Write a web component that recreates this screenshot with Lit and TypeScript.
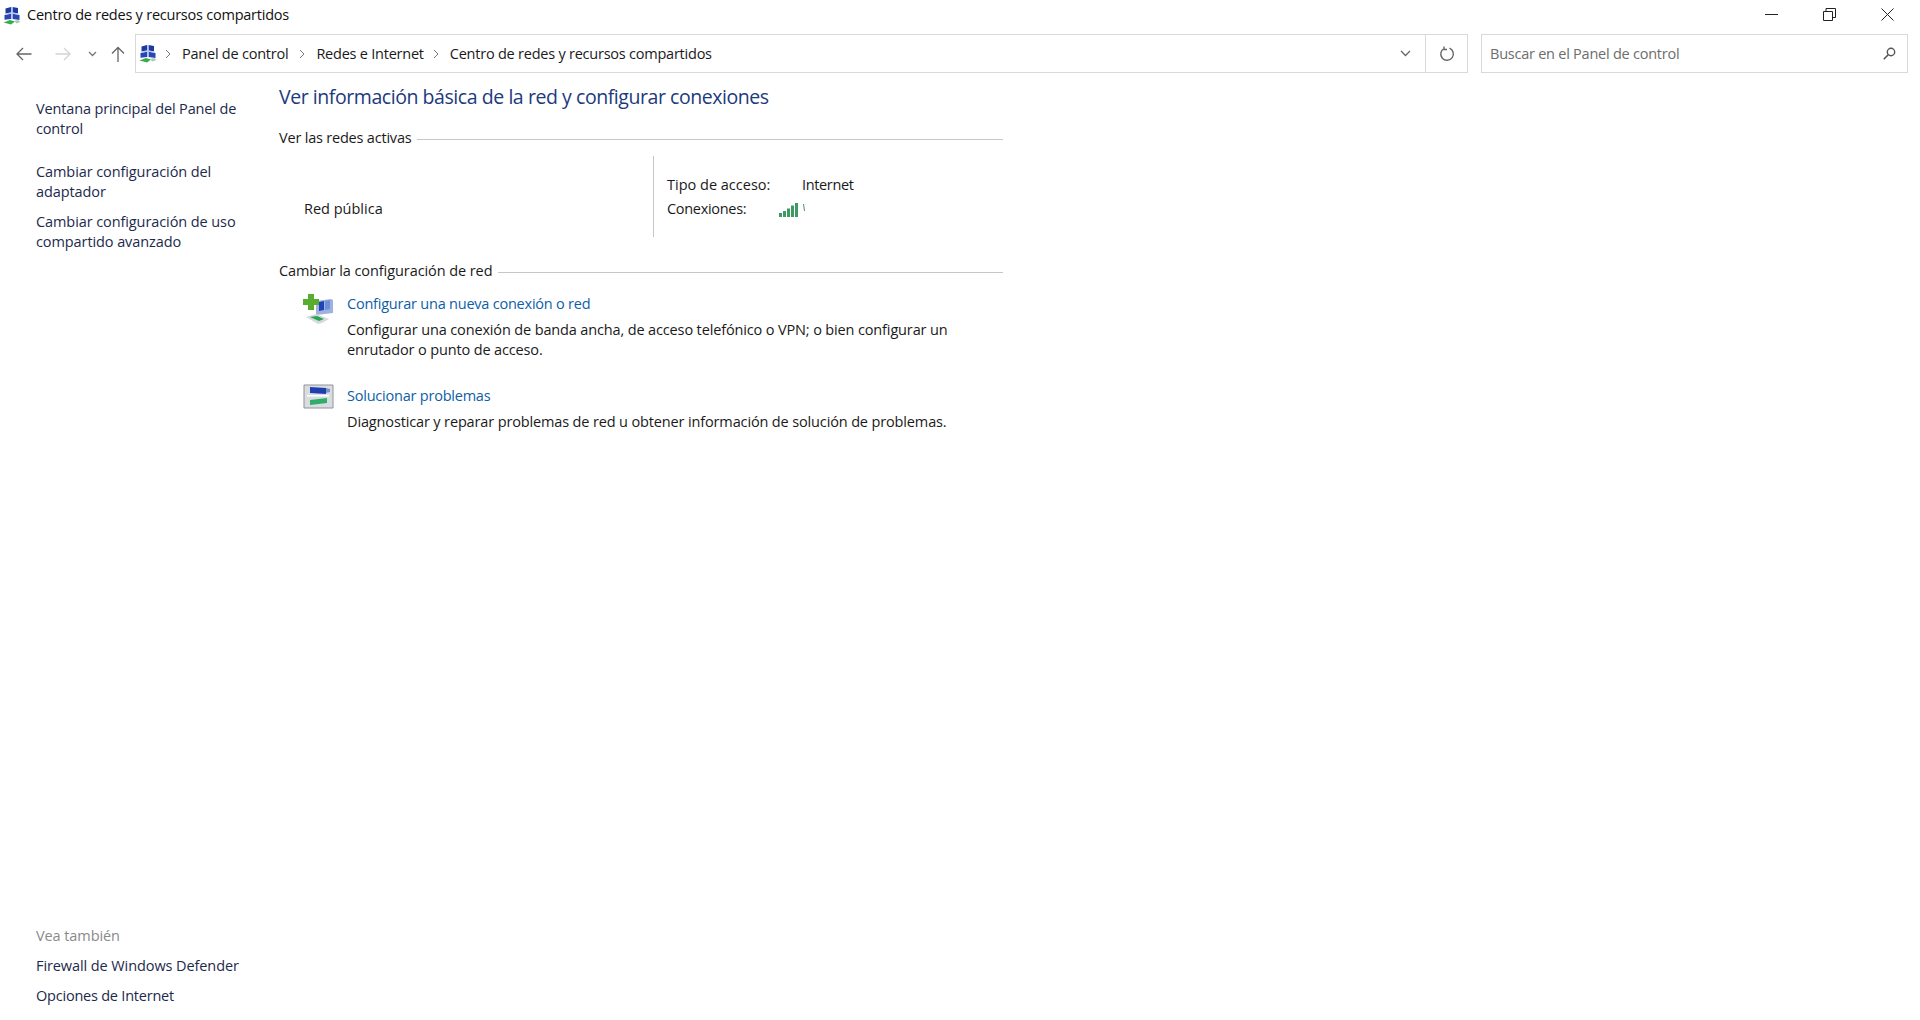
import { LitElement, html, css, svg } from "lit";
import { customElement } from "lit/decorators.js";

const cpIcon = svg`<svg class="cp" viewBox="0 0 18 19" width="18" height="19">
  <path d="M2.500 2.500l5.500-1.500v5.500L2.500 7.500zM9.500 1l5.500 1v5.500L9.500 6.500z" fill="#1f3a9e"/>
  <path d="M1.500 9l6.500-1.300v5.300L1.500 13.800zM9.500 7.700L16.500 9v5l-7-1z" fill="#2946b4"/>
  <path d="M8 1h1.500v12H8zM2 7.500l6-1 1.500 0 6 1v1.200l-6.500-1.200-6.500 1.200z" fill="#b4c6f2"/>
  <path d="M.5 16.500l6.500-2.500 5 1.500-4 3z" fill="#39ab4f"/>
  <path d="M11 15l4-1 2.500 2-4 1.500z" fill="#a6cfae"/>
</svg>`;

@customElement("app-root")
export class AppRoot extends LitElement {
  static styles = css`
    :host {
      display: flex; flex-direction: column; width: 1920px; height: 1020px; overflow: hidden;
      background: #fff; color: #1a1a1a;
      font-family: "Open Sans", "Noto Sans", sans-serif; font-size: 14.5px; line-height: 20px;
    }
    .titlebar { height: 34px; flex: none; display: flex; align-items: center; padding: 0 0 4px 3px; box-sizing: border-box; }
    .titlebar .cp { margin-right: 6px; }
    .title { flex: 1; letter-spacing: -0.23px; color: #111; }
    .winbtns { display: flex; align-items: center; gap: 45px; padding: 0 26px 1px 0; }
    .winbtns svg { display: block; }
    .nav { height: 39px; flex: none; display: flex; align-items: center; }
    .navbtns { width: 135px; flex: none; display: flex; align-items: center; padding-left: 16px; box-sizing: border-box; }
    .navbtns svg { display: block; }
    .address { width: 1333px; height: 39px; box-sizing: border-box; flex: none; border: 1px solid #d9d9d9; display: flex; align-items: center; padding-left: 3px; }
    .crumbs { flex: 1; display: flex; align-items: center; letter-spacing: -0.23px; color: #1a1a1a; }
    .crumbs .cp { margin-right: 8px; }
    .sep { margin: 0 11px 0 9px; display: block; flex: none; }
    .sep.first { margin: 0 11px 0 0; }
    .sep.second { margin: 0 11px 0 11px; }
    .dd { width: 40px; display: flex; justify-content: center; }
    .refresh { width: 41px; height: 37px; border-left: 1px solid #d9d9d9; display: flex; align-items: center; justify-content: center; }
    .search { margin-left: 13px; width: 427px; height: 39px; box-sizing: border-box; flex: none; border: 1px solid #d9d9d9; display: flex; align-items: center; justify-content: space-between; padding: 0 11px 0 8px; color: #6d6d6d; letter-spacing: -0.24px; }
    .body { flex: 1; display: flex; min-height: 0; }
    .side { width: 279px; flex: none; box-sizing: border-box; padding: 26px 0 0 36px; display: flex; flex-direction: column; color: #1d2a4d; letter-spacing: -0.09px; }
    .side .item { width: 215px; }
    .side .a { margin-bottom: 23px; letter-spacing: -0.15px; }
    .side .b { margin-bottom: 10px; }
    .spacer { flex: 1; }
    .seealso { color: #8a8a8a; margin-bottom: 10px; }
    .side .c { margin-bottom: 10px; }
    .side .d { margin-bottom: 14px; letter-spacing: -0.22px; }
    .main { width: 724px; flex: none; padding-top: 10px; letter-spacing: -0.14px; }
    h1 { margin: 0; font-size: 19.5px; font-weight: 400; line-height: 28px; letter-spacing: -0.44px; color: #1c3a7d; }
    .group { display: flex; align-items: center; gap: 6px; height: 20px; white-space: nowrap; }
    .group .rule { flex: 1; height: 1px; background: #c4c8cc; margin-top: 3px; }
    .g1 { margin-top: 17px; letter-spacing: -0.2px; }
    .active { display: flex; height: 81px; margin-top: 8px; }
    .left { width: 349px; padding: 43px 0 0 25px; letter-spacing: 0; }
    .vr { width: 1px; background: #c4c8cc; flex: none; }
    .info { padding: 17px 0 0 13px; display: grid; grid-template-columns: 135px auto; grid-auto-rows: 24px; align-items: center; }
    .tipo { letter-spacing: 0; }
    .inet { letter-spacing: -0.35px; }
    .cx { letter-spacing: -0.3px; }
    .conn { display: flex; align-items: center; margin-left: -23px; }
    .conn svg { display: block; }
    .g2 { margin-top: 24px; letter-spacing: -0.08px; }
    .task { display: flex; padding-left: 24px; }
    .task .ico { width: 44px; flex: none; }
    .task svg { display: block; }
    .t1 { margin-top: 13px; }
    .t2 { margin-top: 26px; }
    .link { color: #0d5ea6; letter-spacing: -0.22px; }
    .link-row { margin-bottom: 6px; }
  `;

  render() {
    return html`
      <div class="titlebar">
        ${cpIcon}
        <div class="title">Centro de redes y recursos compartidos</div>
        <div class="winbtns">
          <svg width="13" height="13" viewBox="0 0 13 13"><path d="M0 6.500h13" stroke="#222" fill="none"/></svg>
          <svg width="13" height="13" viewBox="0 0 13 13"><path d="M.5 3.500h9v9h-9zM3 3.500V.5h9.500v9H9.500" stroke="#222" fill="none"/></svg>
          <svg width="13" height="13" viewBox="0 0 13 13"><path d="M.5.5l12 12M12.500.5l-12 12" stroke="#222" fill="none"/></svg>
        </div>
      </div>
      <div class="nav">
        <div class="navbtns">
          <svg width="16" height="14" viewBox="0 0 16 14"><path d="M15.500 7H1M7 1L1 7l6 6" stroke="#666" stroke-width="1.3" fill="none"/></svg>
          <svg style="margin-left:23px" width="16" height="14" viewBox="0 0 16 14"><path d="M.5 7H15M9 1l6 6-6 6" stroke="#d4d4d4" stroke-width="1.3" fill="none"/></svg>
          <svg style="margin-left:17px" width="9" height="6" viewBox="0 0 9 6"><path d="M1 1l3.500 3.500L8 1" stroke="#777" stroke-width="1.3" fill="none"/></svg>
          <svg style="margin-left:14px" width="14" height="16" viewBox="0 0 14 16"><path d="M7 16V1.500M1 7.500l6-6 6 6" stroke="#666" stroke-width="1.3" fill="none"/></svg>
        </div>
        <div class="address">
          <div class="crumbs">
            ${cpIcon}
            <svg class="sep first" width="6" height="10" viewBox="0 0 6 10"><path d="M1 1l4 4-4 4" stroke="#777" fill="none"/></svg>
            <span>Panel de control</span>
            <svg class="sep second" width="6" height="10" viewBox="0 0 6 10"><path d="M1 1l4 4-4 4" stroke="#777" fill="none"/></svg>
            <span>Redes e Internet</span>
            <svg class="sep" width="6" height="10" viewBox="0 0 6 10"><path d="M1 1l4 4-4 4" stroke="#777" fill="none"/></svg>
            <span>Centro de redes y recursos compartidos</span>
          </div>
          <div class="dd"><svg width="11" height="7" viewBox="0 0 11 7"><path d="M1 1l4.500 4.500L10 1" stroke="#666" stroke-width="1.3" fill="none"/></svg></div>
          <div class="refresh"><svg width="16" height="16" viewBox="0 0 16 16"><path d="M5 2.500A6.300 6.300 0 1 0 10.500 2.200M5 .5v3h3" stroke="#666" stroke-width="1.4" fill="none"/></svg></div>
        </div>
        <div class="search">
          <span>Buscar en el Panel de control</span>
          <svg width="13" height="13" viewBox="0 0 13 13"><circle cx="8" cy="5" r="3.700" stroke="#555" stroke-width="1.4" fill="none"/><path d="M5.200 7.800L.8 12.200" stroke="#555" stroke-width="1.6"/></svg>
        </div>
      </div>
      <div class="body">
        <div class="side">
          <div class="item a">Ventana principal del Panel de control</div>
          <div class="item b">Cambiar configuración del adaptador</div>
          <div class="item">Cambiar configuración de uso compartido avanzado</div>
          <div class="spacer"></div>
          <div class="seealso">Vea también</div>
          <div class="c">Firewall de Windows Defender</div>
          <div class="d">Opciones de Internet</div>
        </div>
        <div class="main">
          <h1>Ver información básica de la red y configurar conexiones</h1>
          <div class="group g1"><span>Ver las redes activas</span><div class="rule"></div></div>
          <div class="active">
            <div class="left">Red pública</div>
            <div class="vr"></div>
            <div class="info">
              <span class="tipo">Tipo de acceso:</span><span class="inet">Internet</span>
              <span class="cx">Conexiones:</span>
              <span class="conn">
                <svg width="26" height="15" viewBox="0 0 26 15"><path d="M0 11h3v4H0zM4 9h3v6H4zM8 6.500h3V15H8zM12 3.500h3V15h-3zM16 1h3v14h-3z" fill="#3c9a62"/><path d="M24.500 2l1 7" stroke="#4d8f72" fill="none"/></svg>
              </span>
            </div>
          </div>
          <div class="group g2"><span>Cambiar la configuración de red</span><div class="rule"></div></div>
          <div class="task t1">
            <div class="ico">
              <svg width="31" height="30" viewBox="0 0 31 30">
                <path d="M13 7l15-2 2 1v13l-17 2z" fill="#9fb2de"/>
                <path d="M16 8l5-1v9l-5 1z" fill="#1f45b4"/>
                <path d="M22 7l5-1v9l-5 1z" fill="#6f8fdc"/>
                <path d="M5 0h6v5h5v6h-5v5H5v-5H0V5h5z" fill="#59ad2e"/>
                <path d="M3 23l10-3 13 5-7 4-4 1z" fill="#d5dadf"/>
                <path d="M7 23l7-1 7 3-5 2z" fill="#27a550"/>
              </svg>
            </div>
            <div>
              <div class="link link-row">Configurar una nueva conexión o red</div>
              <div>Configurar una conexión de banda ancha, de acceso telefónico o VPN; o bien configurar un enrutador o punto de acceso.</div>
            </div>
          </div>
          <div class="task t2">
            <div class="ico">
              <svg style="margin-top:-3px" width="31" height="27" viewBox="0 0 31 27">
                <path d="M1 2h29v23H1z" fill="#d9dde2" stroke="#8f9499"/>
                <path d="M7 4l16 1v6l-16-1z" fill="#1f3fae"/>
                <path d="M23 5l4 1v3l-4 1z" fill="#7f90c9"/>
                <path d="M7 17l17-2v5l-17 2z" fill="#2fae6a"/>
                <path d="M4 12h22v1.500H4z" fill="#fff"/>
              </svg>
            </div>
            <div>
              <div class="link link-row">Solucionar problemas</div>
              <div>Diagnosticar y reparar problemas de red u obtener información de solución de problemas.</div>
            </div>
          </div>
        </div>
      </div>
    `;
  }
}
